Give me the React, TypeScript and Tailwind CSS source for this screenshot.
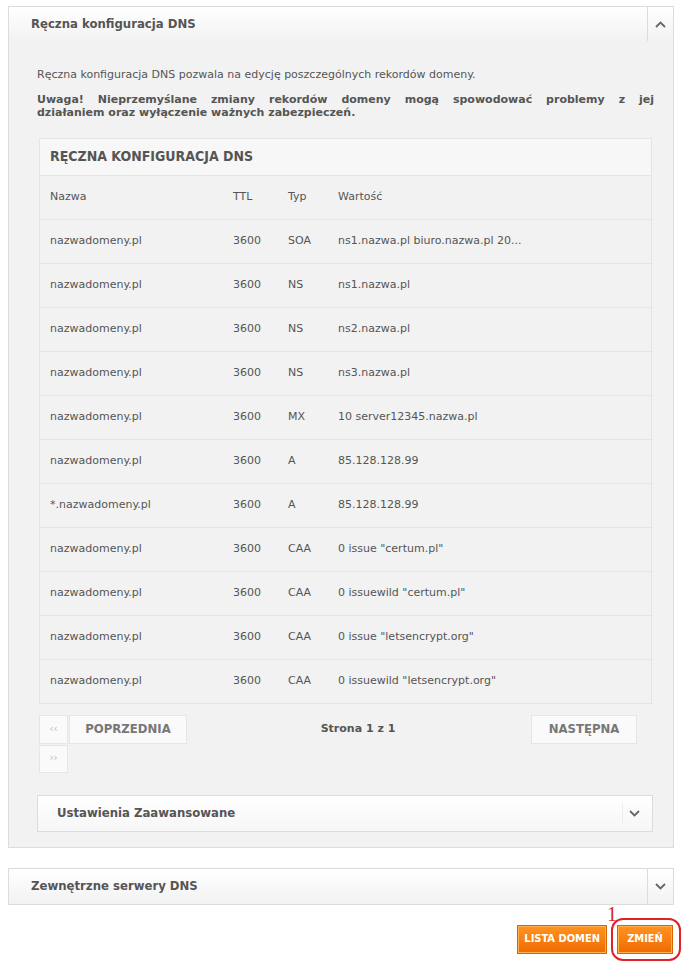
import React from "react";

const rows: [string, string, string, string][] = [
  ["nazwadomeny.pl", "3600", "SOA", "ns1.nazwa.pl biuro.nazwa.pl 20..."],
  ["nazwadomeny.pl", "3600", "NS", "ns1.nazwa.pl"],
  ["nazwadomeny.pl", "3600", "NS", "ns2.nazwa.pl"],
  ["nazwadomeny.pl", "3600", "NS", "ns3.nazwa.pl"],
  ["nazwadomeny.pl", "3600", "MX", "10 server12345.nazwa.pl"],
  ["nazwadomeny.pl", "3600", "A", "85.128.128.99"],
  ["*.nazwadomeny.pl", "3600", "A", "85.128.128.99"],
  ["nazwadomeny.pl", "3600", "CAA", '0 issue "certum.pl"'],
  ["nazwadomeny.pl", "3600", "CAA", '0 issuewild "certum.pl"'],
  ["nazwadomeny.pl", "3600", "CAA", '0 issue "letsencrypt.org"'],
  ["nazwadomeny.pl", "3600", "CAA", '0 issuewild "letsencrypt.org"'],
];

const Chevron = ({ up }: { up?: boolean }) => (
  <svg width="11" height="7" viewBox="0 0 11 7" className="block">
    <path
      d={up ? "M1 6 L5.5 1.5 L10 6" : "M1 1 L5.5 5.5 L10 1"}
      fill="none"
      stroke="#666"
      strokeWidth="1.8"
    />
  </svg>
);

const cond = { fontFamily: '"DejaVu Sans Condensed", "DejaVu Sans", sans-serif' };

function Row({ c }: { c: [string, string, string, string] }) {
  return (
    <div className="flex h-[44px] items-center border-t border-[#e4e4e4] text-[11px] text-[#555]">
      <div className="w-[193px] pl-[10px]">{c[0]}</div>
      <div className="w-[55px]">{c[1]}</div>
      <div className="w-[50px]">{c[2]}</div>
      <div className="flex-1">{c[3]}</div>
    </div>
  );
}

export default function App() {
  return (
    <div
      className="w-[682px] h-[964px] bg-white relative"
      style={{ fontFamily: '"DejaVu Sans", Verdana, sans-serif' }}
    >
      <div className="pt-[6px] pl-[8px] pr-[8px]">
        {/* main panel */}
        <div className="border border-[#dcdcdc] bg-[#f2f2f2]">
          <div className="flex h-[34px] bg-gradient-to-b from-white to-[#f2f2f2]">
            <div
              className="flex-1 flex items-center pl-[22px] text-[13px] font-bold text-[#555]"
              style={cond}
            >
              Ręczna konfiguracja DNS
            </div>
            <div className="w-[26px] border-l border-[#dcdcdc] flex items-center justify-center">
              <Chevron up />
            </div>
          </div>
          <div className="pl-[28px] pr-[19px] pt-[26px] text-[11px] text-[#555]">
            <p>Ręczna konfiguracja DNS pozwala na edycję poszczególnych rekordów domeny.</p>
            <p className="mt-[9px] font-bold leading-[13px] text-[#555]">
              <span className="block text-justify [text-align-last:justify]">
                Uwaga! Nieprzemyślane zmiany rekordów domeny mogą spowodować problemy z jej
              </span>
              <span className="block">działaniem oraz wyłączenie ważnych zabezpieczeń.</span>
            </p>
          </div>
          <div className="ml-[30px] mr-[21px] mt-[19px] border border-[#e4e4e4]">
            <div
              className="h-[36px] flex items-center pl-[10px] bg-[#f7f7f7] text-[14px] font-bold text-[#555]"
              style={cond}
            >
              RĘCZNA KONFIGURACJA DNS
            </div>
            <Row c={["Nazwa", "TTL", "Typ", "Wartość"]} />
            {rows.map((r, i) => (
              <Row key={i} c={r} />
            ))}
          </div>
          {/* pagination */}
          <div className="ml-[30px] mr-[21px] mt-[11px] flex items-start text-[#777]" style={cond}>
            <div className="flex flex-col gap-[1px]">
              <div className="flex gap-[1px]">
                <div className="w-[29px] h-[29px] bg-[#fafafa] border border-[#e6e6e6] flex items-center justify-center text-[11px] text-[#ccc] font-bold">
                  ‹‹
                </div>
                <div className="w-[118px] h-[29px] bg-[#fafafa] border border-[#e6e6e6] flex items-center justify-center text-[13px] font-bold">
                  POPRZEDNIA
                </div>
              </div>
              <div className="w-[29px] h-[28px] bg-[#fafafa] border border-[#e6e6e6] flex items-center justify-center text-[11px] text-[#ccc] font-bold">
                ››
              </div>
            </div>
            <div
              className="flex-1 h-[29px] flex items-center justify-center text-[11px] font-bold text-[#555] pr-[2px]"
              style={{ fontFamily: '"DejaVu Sans", sans-serif' }}
            >
              Strona 1 z 1
            </div>
            <div className="w-[106px] h-[29px] mr-[15px] bg-[#fafafa] border border-[#e6e6e6] flex items-center justify-center text-[13px] font-bold">
              NASTĘPNA
            </div>
          </div>
          {/* advanced */}
          <div className="ml-[28px] mr-[20px] mt-[22px] mb-[15px] h-[37px] flex border border-[#dcdcdc] bg-gradient-to-b from-white to-[#f6f6f6]">
            <div
              className="flex-1 flex items-center pl-[19px] text-[13px] font-bold text-[#555]"
              style={cond}
            >
              Ustawienia Zaawansowane
            </div>
            <div className="w-[30px] flex items-center">
              <div className="h-[20px] border-l border-[#ececec]" />
              <div className="flex-1 flex justify-center pr-[6px]">
                <Chevron />
              </div>
            </div>
          </div>
        </div>

        {/* external DNS */}
        <div className="mt-[20px] h-[37px] flex border border-[#dcdcdc] bg-gradient-to-b from-white to-[#f2f2f2]">
          <div
            className="flex-1 flex items-center pl-[22px] text-[13px] font-bold text-[#555]"
            style={cond}
          >
            Zewnętrzne serwery DNS
          </div>
          <div className="w-[26px] border-l border-[#dcdcdc] flex items-center justify-center">
            <Chevron />
          </div>
        </div>

        {/* buttons */}
        <div className="mt-[20px] flex justify-end gap-[10px] pr-[1px]">
          <div
            className="h-[29px] px-[6px] flex items-center border border-[#d96400] bg-gradient-to-b from-[#ff9420] to-[#ee6a00] text-white text-[11px] font-bold shadow-[inset_0_0_0_1px_#ffb050]"
            style={cond}
          >
            LISTA DOMEN
          </div>
          <div className="relative">
            <div
              className="h-[29px] w-[56px] flex items-center justify-center border border-[#d96400] bg-gradient-to-b from-[#ff9420] to-[#ee6a00] text-white text-[11px] font-bold shadow-[inset_0_0_0_1px_#ffb050]"
              style={cond}
            >
              ZMIEŃ
            </div>
            <div className="absolute left-[-6px] top-[-7px] w-[70px] h-[43px] border-2 border-[#e0202a] rounded-[12px]" />
            <div
              className="absolute left-[-10px] top-[-26px] text-[20px] text-[#e0202a]"
              style={{ fontFamily: '"Liberation Serif", serif' }}
            >
              1
            </div>
          </div>
        </div>
      </div>
    </div>
  );
}
